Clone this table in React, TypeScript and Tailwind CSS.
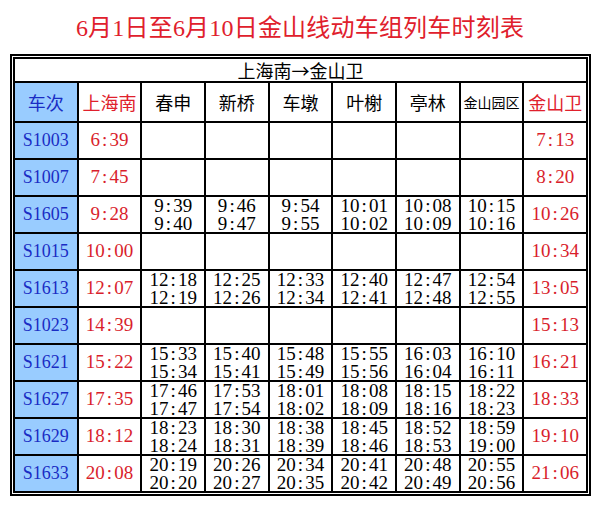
import React from "react";

type Row = { no: string; start: string; mid: ([string, string] | null)[]; end: string };

const E = [null, null, null, null, null, null];

const rows: Row[] = [
  { no: "S1003", start: "6:39", mid: E, end: "7:13" },
  { no: "S1007", start: "7:45", mid: E, end: "8:20" },
  {
    no: "S1605",
    start: "9:28",
    mid: [["9:39", "9:40"], ["9:46", "9:47"], ["9:54", "9:55"], ["10:01", "10:02"], ["10:08", "10:09"], ["10:15", "10:16"]],
    end: "10:26",
  },
  { no: "S1015", start: "10:00", mid: E, end: "10:34" },
  {
    no: "S1613",
    start: "12:07",
    mid: [["12:18", "12:19"], ["12:25", "12:26"], ["12:33", "12:34"], ["12:40", "12:41"], ["12:47", "12:48"], ["12:54", "12:55"]],
    end: "13:05",
  },
  { no: "S1023", start: "14:39", mid: E, end: "15:13" },
  {
    no: "S1621",
    start: "15:22",
    mid: [["15:33", "15:34"], ["15:40", "15:41"], ["15:48", "15:49"], ["15:55", "15:56"], ["16:03", "16:04"], ["16:10", "16:11"]],
    end: "16:21",
  },
  {
    no: "S1627",
    start: "17:35",
    mid: [["17:46", "17:47"], ["17:53", "17:54"], ["18:01", "18:02"], ["18:08", "18:09"], ["18:15", "18:16"], ["18:22", "18:23"]],
    end: "18:33",
  },
  {
    no: "S1629",
    start: "18:12",
    mid: [["18:23", "18:24"], ["18:30", "18:31"], ["18:38", "18:39"], ["18:45", "18:46"], ["18:52", "18:53"], ["18:59", "19:00"]],
    end: "19:10",
  },
  {
    no: "S1633",
    start: "20:08",
    mid: [["20:19", "20:20"], ["20:26", "20:27"], ["20:34", "20:35"], ["20:41", "20:42"], ["20:48", "20:49"], ["20:55", "20:56"]],
    end: "21:06",
  },
];

function Time({ t }: { t: string }) {
  const [h, m] = t.split(":");
  return (
    <span className="whitespace-nowrap">
      {h}
      <span className="inline-block w-[0.5em] text-center">:</span>
      {m}
    </span>
  );
}

const stations = ["春申", "新桥", "车墩", "叶榭", "亭林"];

const cjk = "[font-family:'Noto_Sans_CJK_SC',sans-serif]";

export default function App() {
  return (
    <div className="w-[600px] h-[508px] bg-white overflow-hidden [font-family:'Liberation_Serif','Noto_Sans_CJK_SC',serif]">
      <div className="h-[54px] flex items-center justify-center pt-[1px] text-[24px] leading-none text-[#e0202c] tracking-[0.2px]">
        6月1日至6月10日金山线动车组列车时刻表
      </div>
      <div className="ml-[10px] w-[581px] border-2 border-black p-[1px] bg-white">
        <div className="border-2 border-black bg-black grid grid-cols-9 grid-rows-[22px_38px_repeat(10,35px)] gap-[2px]">
          <div className="col-span-9 bg-white flex items-center justify-center text-[18px] leading-none text-black [font-family:'Noto_Sans_CJK_SC',sans-serif]">
            上海南→金山卫
          </div>
          <div className="bg-[#99ccff] flex items-center justify-center text-[18px] text-[#1a2cc4] [font-family:'Noto_Sans_CJK_SC',sans-serif]">
            车次
          </div>
          <div className="bg-white flex items-center justify-center text-[18px] text-[#e0202c] [font-family:'Noto_Sans_CJK_SC',sans-serif]">
            上海南
          </div>
          {stations.map((s) => (
            <div
              key={s}
              className="bg-white flex items-center justify-center text-[18px] text-black [font-family:'Noto_Sans_CJK_SC',sans-serif]"
            >
              {s}
            </div>
          ))}
          <div className="bg-white flex items-center justify-center text-[14px] text-black whitespace-nowrap [font-family:'Noto_Sans_CJK_SC',sans-serif]">
            金山园区
          </div>
          <div className="bg-white flex items-center justify-center text-[18px] text-[#e0202c] [font-family:'Noto_Sans_CJK_SC',sans-serif]">
            金山卫
          </div>
          {rows.map((r) => (
            <React.Fragment key={r.no}>
              <div className="bg-[#99ccff] flex items-center justify-center text-[18px] text-[#1a2cc4]">{r.no}</div>
              <div className="bg-white flex items-center justify-center text-[19px] text-[#d91e2c]">
                <Time t={r.start} />
              </div>
              {r.mid.map((m, i) => (
                <div
                  key={i}
                  className="bg-white overflow-hidden flex flex-col items-center justify-center text-[19px] leading-[18px] text-black pt-[1px]"
                >
                  {m && (
                    <>
                      <Time t={m[0]} />
                      <Time t={m[1]} />
                    </>
                  )}
                </div>
              ))}
              <div className="bg-white flex items-center justify-center text-[19px] text-[#d91e2c]">
                <Time t={r.end} />
              </div>
            </React.Fragment>
          ))}
        </div>
      </div>
    </div>
  );
}
